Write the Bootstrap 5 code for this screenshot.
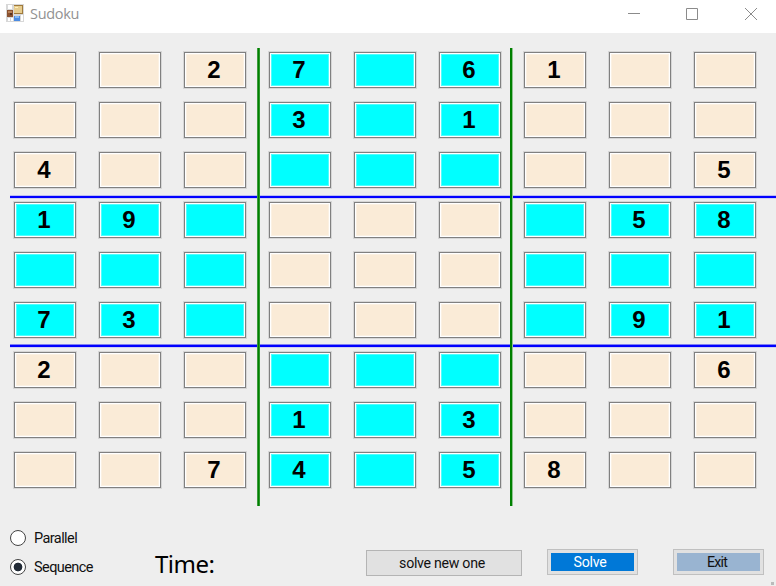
<!DOCTYPE html>
<html lang="en">
<head>
<meta charset="utf-8">
<title>Sudoku</title>
<link href="https://cdn.jsdelivr.net/npm/bootstrap@5.3.0/dist/css/bootstrap.min.css" rel="stylesheet">
<style>
body{background:#eee;width:776px;height:586px;font-family:Roboto,"Liberation Sans",sans-serif;color:#111}
.titlebar{height:33px;padding:0 19px 0 6px}
.titlebar .app-icon{margin-top:4px}
.titlebar .caption{font:14.5px/27px "Open Sans",sans-serif;color:#929292;margin-left:6px;letter-spacing:-.3px}
.winctl{gap:46px;height:28px}
.board{height:458px;margin:15px 0 0 10px;padding:4px 0 0 4px}
.cells{display:grid;grid-template-columns:repeat(9,62px);grid-auto-rows:36px;column-gap:23px;row-gap:14px}
.cell{background:#faebd7;border:1px solid #808080;box-shadow:inset 0 0 0 1px #fff,inset 0 0 0 2px rgba(255,255,255,.3),0 0 0 1px #d6d6d6;font:bold 24px/34px "Liberation Sans",Arial,sans-serif;color:#000;text-align:center;padding-right:2px}
.cell.alt{background:#0ff}
.rule-h{left:0;right:0;height:4px}
.rule-v{top:0;bottom:0;width:3px}
.h1-line{top:147px;background:linear-gradient(#bcbcf3 1px,#00f 1px,#00f 3px,#d0d0f0 3px)}
.h2-line{top:296px;background:linear-gradient(#8080f3 1px,#00f 1px,#00f 3px,#d0d0f0 3px)}
.v1-line{left:247px;background:linear-gradient(90deg,#3c9c3c 1px,#008000 1px,#008000 2px,#2c962c 2px)}
.v2-line{left:500px;background:linear-gradient(90deg,#008000 2px,#90c290 2px)}
.footer-bar{height:80px;padding-left:10px}
.modes{width:145px;padding-top:22px}
.mode{height:20px;margin-bottom:9px;font-size:14.5px;line-height:18px;letter-spacing:-.58px}
.mode span{padding-top:2px}
.mode .form-check-input{width:16px;height:16px;margin:0 8px 0 0;border:1px solid #444;background-color:#fff;flex:none}
.mode .form-check-input:checked{background-image:radial-gradient(circle,#222b36 0 4px,transparent 4.7px)}
.time{font:24px/30px "Noto Sans",sans-serif;letter-spacing:-.5px;width:211px;padding-top:43px;color:#000}
.wbtn{border:1px solid #b4b4b4;border-radius:0;padding:0;background:#e1e1e1;color:#111;font-size:14.2px;line-height:25px;letter-spacing:-.3px}
.wbtn-new{width:156px;height:26px;margin-top:44px;padding:0 4px 0 0}
.wbtn-s{width:91px;height:26px;margin-top:43px;padding:3px;border-color:#c0c0c0}
.wbtn-s span{display:block;height:18px;line-height:18px;padding-right:5px}
.wbtn-solve{margin-left:25px}.wbtn-solve span{background:#0078d7;color:#fff}
.wbtn-exit{margin-left:35px}.wbtn-exit span{background:#99b4d1;letter-spacing:-.8px;padding-right:3px}
.grip{right:2px;bottom:1px;width:3px;height:3px;background:#bbb}
</style>
<script src="https://cdn.jsdelivr.net/npm/bootstrap@5.3.0/dist/js/bootstrap.bundle.min.js"></script>
</head>
<body class="position-relative overflow-hidden">
<header class="titlebar bg-white d-flex align-items-start">
  <svg class="app-icon" width="18" height="18" viewBox="0 0 18 18"><path fill="#d8d8d8" d="M0 0h18v18H0z"/><path fill="#fff" d="M2 1h4v4H2zM2 14h2v3H2zM5 14h2v3H5zM15 11h2v6h-2z"/><path fill="#a07a3c" d="M8 1h9v9H8z"/><path fill="#e6cc8e" d="M8 2h8v7H8z"/><path fill="#fff0bb" d="M9 3h3v1H9z"/><path fill="#8a5230" d="M1 6h6v7H1z"/><path fill="#b98258" d="M2 7h4v2H2z"/><path fill="#563322" d="M4 9h2v2H4z"/><path fill="#4b8be2" d="M8 12h6v5H8z"/><path fill="#83b9f6" d="M9 12h4v2H9z"/></svg>
  <span class="caption">Sudoku</span>
  <div class="winctl d-flex align-items-center ms-auto">
    <svg width="12" height="12"><path d="M0 5.5h12" stroke="#8b8b8b"/></svg>
    <svg width="12" height="12"><path d="M.5.5h11v11H.5z" fill="none" stroke="#8b8b8b"/></svg>
    <svg width="13" height="12"><path d="M1 0l12 12M13 0L1 12" stroke="#8b8b8b"/></svg>
  </div>
</header>
<main class="board position-relative">
  <div class="cells" id="cells"></div>
  <div class="rule-h h1-line position-absolute"></div>
  <div class="rule-h h2-line position-absolute"></div>
  <div class="rule-v v1-line position-absolute"></div>
  <div class="rule-v v2-line position-absolute"></div>
</main>
<footer class="footer-bar d-flex align-items-start">
  <div class="modes">
    <label class="mode d-flex align-items-center"><input class="form-check-input" type="radio" name="mode"><span>Parallel</span></label>
    <label class="mode d-flex align-items-center"><input class="form-check-input" type="radio" name="mode" checked><span>Sequence</span></label>
  </div>
  <div class="time">Time:</div>
  <button class="btn wbtn wbtn-new">solve new one</button>
  <button class="btn wbtn wbtn-s wbtn-solve"><span>Solve</span></button>
  <button class="btn wbtn wbtn-s wbtn-exit"><span>Exit</span></button>
</footer>
<div class="grip position-absolute"></div>
<script>
const puzzle = [
  '..27.61..', '...3.1...', '4.......5',
  '19.....58', '.........', '73.....91',
  '2.......6', '...1.3...', '..74.58..'
];
const cells = document.getElementById('cells');
puzzle.forEach((row, r) => [...row].forEach((digit, c) => {
  const cell = document.createElement('div');
  const box = Math.floor(r / 3) + Math.floor(c / 3);
  cell.className = box % 2 ? 'cell alt' : 'cell';
  cell.textContent = digit === '.' ? '' : digit;
  cells.append(cell);
}));
</script>
</body>
</html>
